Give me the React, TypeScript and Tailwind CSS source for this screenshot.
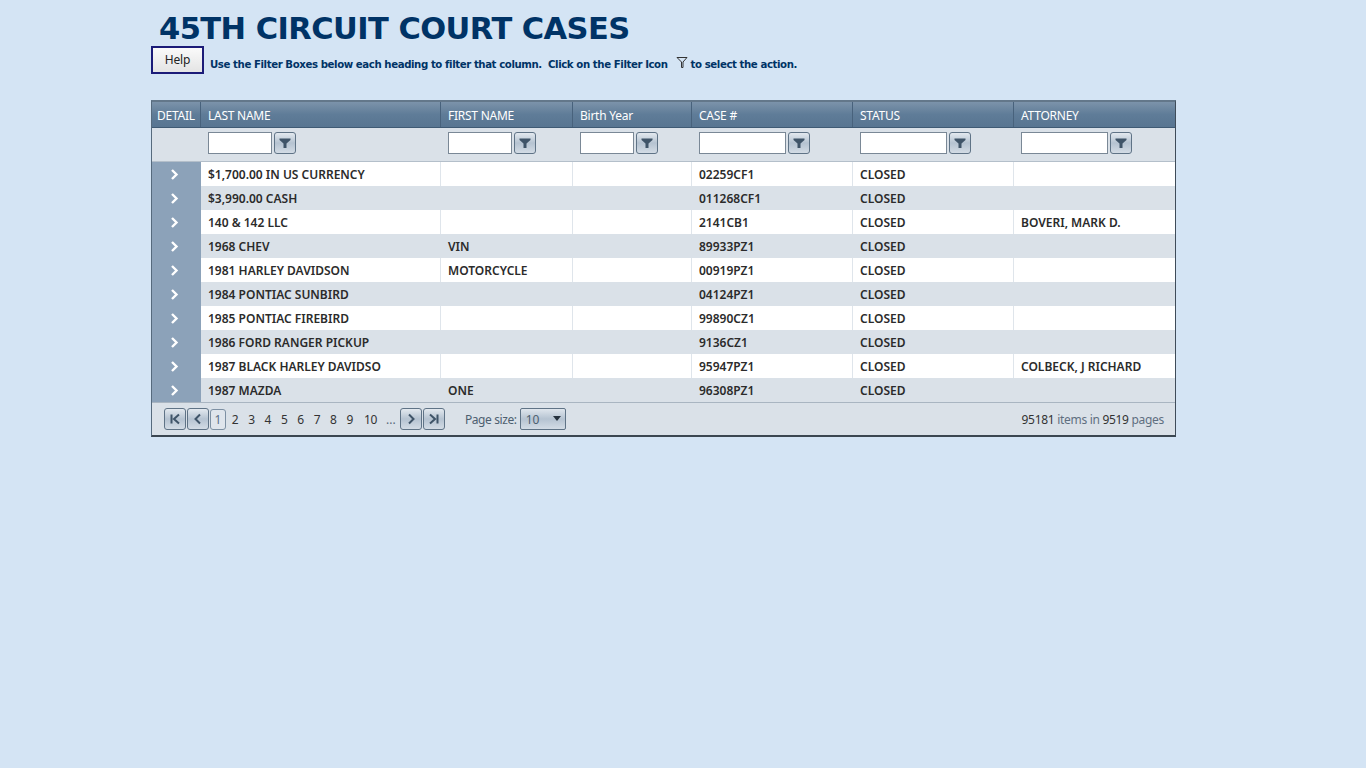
import React from "react";

const gridCols = "grid grid-cols-[49px_240px_132px_119px_161px_161px_161px]";

const headers = ["DETAIL", "LAST NAME", "FIRST NAME", "Birth Year", "CASE #", "STATUS", "ATTORNEY"];

const filterWidths = ["w-[64px]", "w-[64px]", "w-[54px]", "w-[87px]", "w-[87px]", "w-[87px]"];

const rows = [
  ["$1,700.00 IN US CURRENCY", "", "", "02259CF1", "CLOSED", ""],
  ["$3,990.00 CASH", "", "", "011268CF1", "CLOSED", ""],
  ["140 & 142 LLC", "", "", "2141CB1", "CLOSED", "BOVERI, MARK D."],
  ["1968 CHEV", "VIN", "", "89933PZ1", "CLOSED", ""],
  ["1981 HARLEY DAVIDSON", "MOTORCYCLE", "", "00919PZ1", "CLOSED", ""],
  ["1984 PONTIAC SUNBIRD", "", "", "04124PZ1", "CLOSED", ""],
  ["1985 PONTIAC FIREBIRD", "", "", "99890CZ1", "CLOSED", ""],
  ["1986 FORD RANGER PICKUP", "", "", "9136CZ1", "CLOSED", ""],
  ["1987 BLACK HARLEY DAVIDSO", "", "", "95947PZ1", "CLOSED", "COLBECK, J RICHARD"],
  ["1987 MAZDA", "ONE", "", "96308PZ1", "CLOSED", ""],
];

function FilterIcon() {
  return (
    <svg width="12" height="12" viewBox="0 0 12 12">
      <path d="M0.5 1.5H11.5V3L7.5 6.5V11H4.5V6.5L0.5 3Z" fill="#3f5468" />
    </svg>
  );
}

function IconButton({ children, className = "" }: { children: React.ReactNode; className?: string }) {
  return (
    <div
      className={`flex h-[22px] items-center justify-center rounded-[3px] border border-[#5f7386] bg-gradient-to-b from-[#e3e9ef] via-[#b5c3d1] to-[#d3dce5] ${className}`}
    >
      {children}
    </div>
  );
}

function PagerIcon({ d }: { d: string }) {
  return (
    <svg width="12" height="12" viewBox="0 0 12 12" fill="none" stroke="#3f5468" strokeWidth="2">
      <path d={d} />
    </svg>
  );
}

export default function App() {
  return (
    <div className="min-h-[768px] bg-[#d4e4f4] pl-[151px] font-['Noto_Sans',sans-serif]">
      <h1 className="pt-[10px] pl-2 font-['DejaVu_Sans',sans-serif] text-[30.5px] leading-[37px] font-bold tracking-[-0.55px] text-[#003366]">
        45TH CIRCUIT COURT CASES
      </h1>
      <div className="-mt-px flex h-[28px] items-start">
        <button className="h-[28px] w-[53px] border-2 border-[#1b1b78] bg-gradient-to-b from-[#fafafa] to-[#e4e4e4] text-[12px] tracking-[-0.1px] text-[#222222]">
          Help
        </button>
        <p className="mt-[11px] ml-[6px] flex items-start font-['DejaVu_Sans',sans-serif] text-[10.2px] leading-[16px] font-bold tracking-[-0.42px] whitespace-pre text-[#003366]">
          <span>Use the Filter Boxes below each heading to filter that column.  Click on the Filter Icon</span>
          <svg className="mr-[3px] ml-[8px]" width="12" height="12" viewBox="0 0 12 12" fill="none" stroke="#333333" strokeWidth="1">
            <path d="M1 0.5H11L7 5V10.5H5.5V5Z" />
          </svg>
          <span>to select the action.</span>
        </p>
      </div>

      <div className="mt-[26px] w-[1025px] border-t-2 border-r border-b-2 border-l border-t-[#63778a] border-r-[#3f4c59] border-b-[#3b4650] border-l-[#566a7d] bg-[#dae1e8] text-[12px]">
        <div className={`${gridCols} h-[26px] border-b border-[#3f5a74] bg-gradient-to-b from-[#7c93aa] via-[#5f7c98] to-[#587591] tracking-[-0.25px] text-white`}>
          {headers.map((h, i) => (
            <div
              key={h}
              className={`flex items-center border-r border-[#48627c] pt-[3px] last:border-r-0 ${i === 0 ? "justify-center" : "pl-[7px]"}`}
            >
              {h}
            </div>
          ))}
        </div>

        <div className={`${gridCols} h-[34px] border-b border-[#b4bfca]`}>
          <div />
          {filterWidths.map((w, i) => (
            <div key={i} className="flex items-start gap-[2px] pt-[4px] pl-[7px]">
              <div className={`${w} h-[22px] border border-[#7a8896] bg-white`} />
              <IconButton className="w-[22px]">
                <FilterIcon />
              </IconButton>
            </div>
          ))}
        </div>

        {rows.map((row, i) => (
          <div
            key={i}
            className={`${gridCols} h-[24px] font-semibold text-[#2b2b2b] ${i % 2 === 0 ? "bg-white" : "bg-[#dae1e8]"}`}
          >
            <div className="flex items-center justify-center border-r border-[#8ca2b9] bg-[#8ca2b9] pr-[3px]">
              <svg width="9" height="11" viewBox="0 0 9 11" fill="none" stroke="white" strokeWidth="2.4">
                <path d="M2 1L6.5 5.5L2 10" />
              </svg>
            </div>
            {row.map((cell, j) => (
              <div
                key={j}
                className={`flex items-center overflow-hidden pt-[2px] pl-[7px] whitespace-nowrap last:border-r-0 ${i % 2 === 0 ? "border-r border-[#dfe5eb]" : ""}`}
              >
                {cell}
              </div>
            ))}
          </div>
        ))}

        <div className="flex h-[33px] items-center border-t border-[#a9b5c1] pr-[11px] pl-[12px] text-[#333333]">
          <IconButton className="w-[22px]">
            <PagerIcon d="M2.5 1.5V10.5M10 1.5L5 6L10 10.5" />
          </IconButton>
          <IconButton className="ml-[1px] w-[22px]">
            <PagerIcon d="M8 1.5L3.5 6L8 10.5" />
          </IconButton>
          <div className="ml-[1px] flex h-[21px] w-[16px] items-center justify-center rounded-[3px] border border-[#7d90a3] bg-[#dfe5ec] pt-[2px] text-[#5b7086]">
            1
          </div>
          <div className="ml-[1px] flex pt-[2px]">
            {["2", "3", "4", "5", "6", "7", "8", "9"].map((n) => (
              <span key={n} className="w-[16.4px] text-center">
                {n}
              </span>
            ))}
            <span className="w-[24.8px] text-center tracking-[-0.3px]">10</span>
            <span className="w-[16px] text-center text-[#5a6b7c]">...</span>
          </div>
          <IconButton className="ml-[1px] w-[22px]">
            <PagerIcon d="M4 1.5L8.5 6L4 10.5" />
          </IconButton>
          <IconButton className="ml-[1px] w-[22px]">
            <PagerIcon d="M2 1.5L7 6L2 10.5M9.5 1.5V10.5" />
          </IconButton>
          <span className="ml-[20px] pt-[2px] tracking-[-0.4px] text-[#4d5f70]">Page size:</span>
          <div className="ml-[3px] flex h-[22px] w-[46px] items-center justify-between rounded-[2px] border border-[#5f7386] bg-gradient-to-b from-[#dfe6ed] via-[#b5c3d1] to-[#d3dce5] pr-[4px] pl-[5px] text-[#4d5f70]">
            <span className="pt-[2px]">10</span>
            <svg className="-mt-[2px]" width="8" height="5" viewBox="0 0 8 5">
              <path d="M0 0H8L4 5Z" fill="#26323e" />
            </svg>
          </div>
          <div className="ml-auto pt-[2px] tracking-[-0.3px] text-[#5f6f80]">
            <span className="text-[#333333]">95181</span> items in <span className="text-[#333333]">9519</span> pages
          </div>
        </div>
      </div>
    </div>
  );
}
